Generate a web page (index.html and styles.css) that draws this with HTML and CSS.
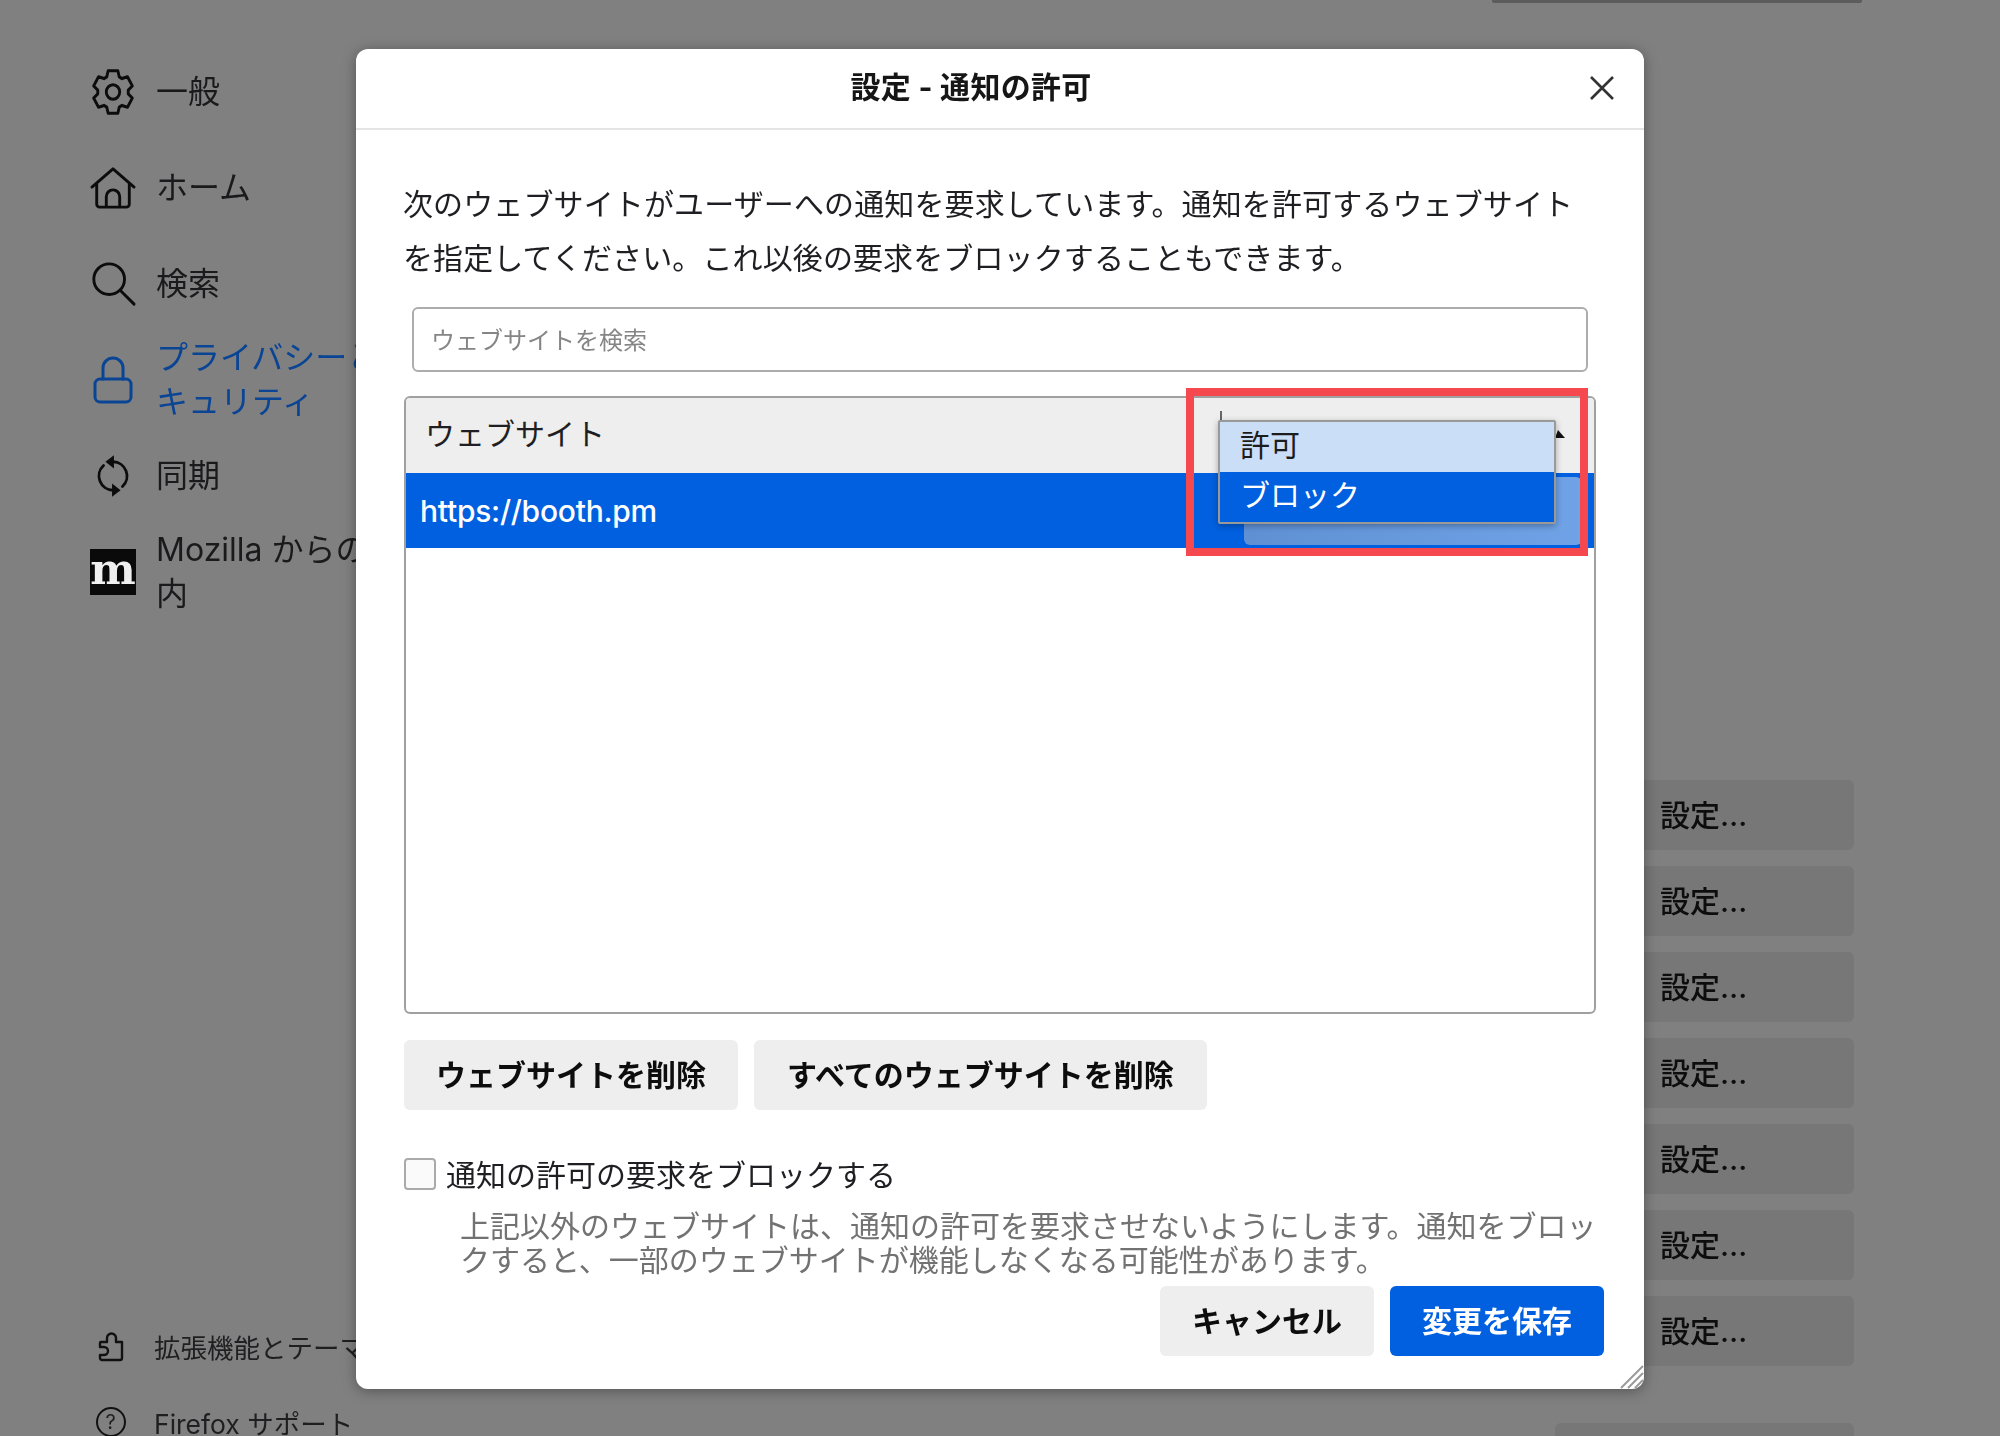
FILE: index.html
```html
<!DOCTYPE html>
<html lang="ja">
<head>
<meta charset="utf-8">
<title>設定 - 通知の許可</title>
<link rel="stylesheet" href="styles.css">
</head>
<body>
<div class="page">
  <aside class="sidebar">
    <nav class="nav">
      <a class="nav-item">
        <span class="nav-icon"><svg class="ico ico-gear" viewBox="0 0 48 48" preserveAspectRatio="none"><path d="M17.5 9.4 18.9 3.6H29.1L30.5 9.4 33.4 11.1 39.1 9.4 44.2 18.2 39.9 22.3V25.7L44.2 29.8 39.1 38.6 33.4 36.9 30.5 38.6 29.1 44.4H18.9L17.5 38.6 14.6 36.9 8.9 38.6 3.8 29.8 8.1 25.7V22.3L3.8 18.2 8.9 9.4 14.6 11.1Z"/><circle cx="24" cy="24" r="7"/></svg></span>
        <span>一般</span>
      </a>
      <a class="nav-item">
        <span class="nav-icon"><svg class="ico" viewBox="0 0 48 48"><path d="M2 23 24 4 46 23M7 19V41a3 3 0 0 0 3 3H38a3 3 0 0 0 3-3V19M17 44V33a7 7 0 0 1 14 0V44"/></svg></span>
        <span>ホーム</span>
      </a>
      <a class="nav-item">
        <span class="nav-icon"><svg class="ico" viewBox="0 0 48 48"><circle cx="20" cy="19" r="16"/><path d="M32 31 46 45"/></svg></span>
        <span>検索</span>
      </a>
      <a class="nav-item nav-item-active">
        <span class="nav-icon"><svg class="ico ico-lock" viewBox="0 0 40 48"><rect x="2" y="23" width="36" height="23" rx="5"/><path d="M10 23V12a10 10 0 0 1 20 0V23"/></svg></span>
        <span>プライバシーとセ<br>キュリティ</span>
      </a>
      <a class="nav-item">
        <span class="nav-icon"><svg class="ico ico-sync" viewBox="5 0 38 48"><path d="M24 9A15 15 0 0 1 34 35M24 39A15 15 0 0 1 14 13"/><path class="solid" d="M25 2V16L16 9ZM23 32V46L32 39Z"/></svg></span>
        <span>同期</span>
      </a>
      <a class="nav-item">
        <span class="nav-icon"><span class="moz-logo">m</span></span>
        <span>Mozilla からの案<br>内</span>
      </a>
    </nav>
    <div class="side-foot">
      <a class="foot-item">
        <span class="nav-icon"><svg class="ico-small" viewBox="0 0 32 32"><path d="M6 12H12V8a4.5 4.5 0 1 1 9 0V12H27V28a2 2 0 0 1-2 2H7a2 2 0 0 1-2-2V25H9a4 4 0 0 0 0-8H5V13a1 1 0 0 1 1-1Z"/></svg></span>
        <span>拡張機能とテーマ</span>
      </a>
      <a class="foot-item">
        <span class="nav-icon"><span class="help-ring">?</span></span>
        <span>Firefox サポート</span>
      </a>
    </div>
  </aside>

  <main class="content">
    <div class="top-box"></div>
    <div class="divider"></div>
    <div class="settings">
      <div class="set-btn">設定…</div>
      <div class="set-btn">設定…</div>
      <div class="set-btn">設定…</div>
      <div class="set-btn">設定…</div>
      <div class="set-btn">設定…</div>
      <div class="set-btn">設定…</div>
      <div class="set-btn">設定…</div>
    </div>
    <div class="set-btn set-btn-last"></div>
  </main>

  <section class="dialog">
    <header class="dlg-head">
      <h1 class="dlg-title">設定 - 通知の許可</h1>
      <button class="dlg-close" aria-label="閉じる"><svg viewBox="0 0 26 26"><path d="M2 2 24 24M24 2 2 24"/></svg></button>
    </header>
    <div class="dlg-body">
      <p class="intro">次のウェブサイトがユーザーへの通知を要求しています。通知を許可するウェブサイト<br>を指定してください。これ以後の要求をブロックすることもできます。</p>
      <div class="search">ウェブサイトを検索</div>
      <div class="table">
        <div class="thead">ウェブサイト</div>
        <div class="trow">
          <span class="site">https://booth.pm</span>
          <span class="status"></span>
        </div>
        <span class="tick"></span>
        <svg class="caret" viewBox="0 0 10 8"><path d="M3 0 10 8H0Z"/></svg>
        <ul class="menu">
          <li class="menu-opt">許可</li>
          <li class="menu-opt menu-opt-on">ブロック</li>
        </ul>
      </div>
      <div class="actions">
        <button class="btn">ウェブサイトを削除</button>
        <button class="btn btn-wide">すべてのウェブサイトを削除</button>
      </div>
      <label class="check">
        <span class="box"></span>
        <span class="check-label">通知の許可の要求をブロックする</span>
      </label>
      <p class="note">上記以外のウェブサイトは、通知の許可を要求させないようにします。通知をブロッ<br>クすると、一部のウェブサイトが機能しなくなる可能性があります。</p>
      <div class="dlg-foot">
        <button class="btn btn-foot">キャンセル</button>
        <button class="btn btn-foot btn-primary">変更を保存</button>
      </div>
    </div>
    <svg class="grip" viewBox="0 0 26 26"><path d="M25 3 3 25M25 10 10 25M25 17 17 25"/></svg>
  </section>

  <div class="callout"></div>
</div>
</body>
</html>
```

FILE: styles.css
```css
* { box-sizing: border-box; }
html, body { margin: 0; height: 100%; overflow: hidden; }
body {
  background: #808080;
  color: #1c1c1e;
  font-family: "Inter", "Noto Sans CJK JP", sans-serif;
  font-size: 30px;
}
.page {
  position: relative;
  display: flex;
  width: 2000px;
  height: 1436px;
  overflow: hidden;
  filter: blur(0.5px);
}

/* sidebar */
.sidebar { width: 500px; flex: none; padding: 44px 0 0 90px; }
.nav-item {
  display: flex;
  align-items: center;
  gap: 20px;
  height: 96px;
  font-size: 32px;
  line-height: 44px;
  color: #1a1a1c;
  white-space: nowrap;
}
.nav-item-active { color: #0a4494; }
.nav-icon { width: 46px; flex: none; display: flex; justify-content: center; align-items: center; }
.ico { width: 46px; height: 48px; fill: none; stroke: currentColor; stroke-width: 3; stroke-linejoin: round; stroke-linecap: round; color: #0c0c0c; overflow: visible; }
.nav-item-active .ico { color: #0a4494; }
.ico-gear { height: 50px; }
.ico-lock { width: 40px; height: 48px; }
.ico-sync { width: 36px; height: 46px; }
.ico .solid { fill: currentColor; stroke: none; }
.moz-logo {
  width: 48px;
  height: 46px;
  background: #0a0a0a;
  color: #f0f0f0;
  font-family: "DejaVu Serif", serif;
  font-weight: 700;
  font-size: 43px;
  line-height: 40px;
  text-align: center;
}
.side-foot { margin-top: 688px; }
.foot-item {
  display: flex;
  align-items: center;
  gap: 23px;
  height: 76px;
  font-size: 26.5px;
  color: #1f1f21;
  white-space: nowrap;
}
.foot-item .nav-icon { width: 41px; }
.ico-small { width: 32px; height: 32px; fill: none; stroke: #111; stroke-width: 2.4; stroke-linejoin: round; overflow: visible; }
.help-ring {
  width: 30px;
  height: 30px;
  border: 2px solid #111;
  border-radius: 50%;
  font-size: 20px;
  line-height: 26px;
  text-align: center;
}

/* page behind */
.content { flex: 1; padding-right: 138px; display: flex; flex-direction: column; align-items: flex-end; }
.top-box { width: 370px; height: 6px; border: 3px solid #5c5c5c; border-top: 0; border-radius: 0 0 6px 6px; }
.divider { width: 370px; height: 2px; margin-top: 660px; background: #707070; }
.settings { display: flex; flex-direction: column; gap: 16px; margin-top: 117px; margin-right: 8px; }
.set-btn {
  width: 299px;
  height: 70px;
  padding-left: 105px;
  border-radius: 6px;
  background: #777;
  color: #0d0d0d;
  font-weight: 500;
  line-height: 70px;
}
.set-btn-last { margin: 57px 8px 0 0; flex: none; }

/* dialog */
.dialog {
  position: absolute;
  left: 356px;
  top: 49px;
  width: 1288px;
  height: 1340px;
  background: #fff;
  border-radius: 12px;
  box-shadow: 0 2px 14px rgba(0, 0, 0, .35);
  color: #1f1f23;
}
.dlg-head {
  display: flex;
  align-items: center;
  height: 81px;
  padding: 0 26px 2px 0;
  border-bottom: 2px solid #e4e4e4;
}
.dlg-title { flex: 1; margin: 0 0 2px; font-size: 30px; font-weight: 700; letter-spacing: .3px; text-align: center; color: #161616; line-height: 74px; }
.dlg-close { width: 32px; height: 32px; padding: 3px; border: 0; background: none; }
.dlg-close svg { display: block; width: 26px; height: 26px; stroke: #333; stroke-width: 2.6; fill: none; }
.dlg-body { padding: 47px 40px 0 48px; }
.intro { margin: 0 0 0 -1px; line-height: 54px; letter-spacing: .12px; white-space: nowrap; }
.search {
  height: 65px;
  margin: 22px 16px 0 8px;
  padding-left: 17px;
  border: 2px solid #adadad;
  border-radius: 6px;
  font-size: 24px;
  line-height: 63px;
  color: #858585;
}
.table {
  position: relative;
  height: 618px;
  margin: 24px 8px 0 0;
  border: 2px solid #a0a0a0;
  border-radius: 6px;
}
.thead { height: 75px; padding-left: 19px; background: #eeeeee; line-height: 73px; border-radius: 4px 4px 0 0; }
.trow { display: flex; align-items: center; justify-content: space-between; height: 75px; background: #0060df; color: #fff; }
.site { padding-left: 14px; font-family: "Inter", sans-serif; font-size: 30px; font-weight: 500; letter-spacing: -.25px; }
.status { width: 338px; height: 68px; margin-right: 12px; border-radius: 6px; background: linear-gradient(90deg, #5f90d4, #6fa2e6); }
.tick { position: absolute; left: 814px; top: 13px; width: 2px; height: 10px; background: #666; }
.caret { position: absolute; left: 1149px; top: 32px; width: 10px; height: 8px; fill: #111; }
.menu {
  position: absolute;
  left: 812px;
  top: 22px;
  width: 338px;
  margin: 0;
  padding: 0;
  list-style: none;
  border: 2px solid #999;
  border-radius: 2px;
  box-shadow: 0 2px 6px rgba(0, 0, 0, .3);
}
.menu-opt { height: 50px; padding-left: 20px; background: #cbdef7; line-height: 46px; color: #1c1c1c; }
.menu-opt-on { background: #0060df; color: #fff; }
.actions { display: flex; gap: 16px; margin-top: 26px; }
.btn {
  height: 70px;
  padding: 0 32px 4px;
  border: 0;
  border-radius: 6px;
  background: #eeeeee;
  color: #0d0d0d;
  font-family: inherit;
  font-size: 30px;
  font-weight: 700;
}
.btn-wide { padding: 0 33px 4px; }
.check { display: flex; align-items: center; gap: 10px; margin-top: 48px; height: 32px; }
.check-label { margin-top: -2px; }
.box { width: 32px; height: 32px; border: 2px solid #aaa; border-radius: 4px; background: #fafafa; }
.note { margin: 19px 0 0 56px; line-height: 34px; color: #727272; white-space: nowrap; }
.dlg-foot { display: flex; justify-content: flex-end; gap: 16px; margin-top: 9px; }
.btn-foot { width: 214px; padding: 0 0 4px; }
.btn-primary { background: #0060df; color: #fff; }
.grip { position: absolute; right: 0; bottom: 0; width: 26px; height: 26px; stroke: #9a9a9a; stroke-width: 2; fill: none; }

/* annotation */
.callout { position: absolute; left: 1186px; top: 388px; width: 402px; height: 168px; border: 8px solid #f5484f; }
```
